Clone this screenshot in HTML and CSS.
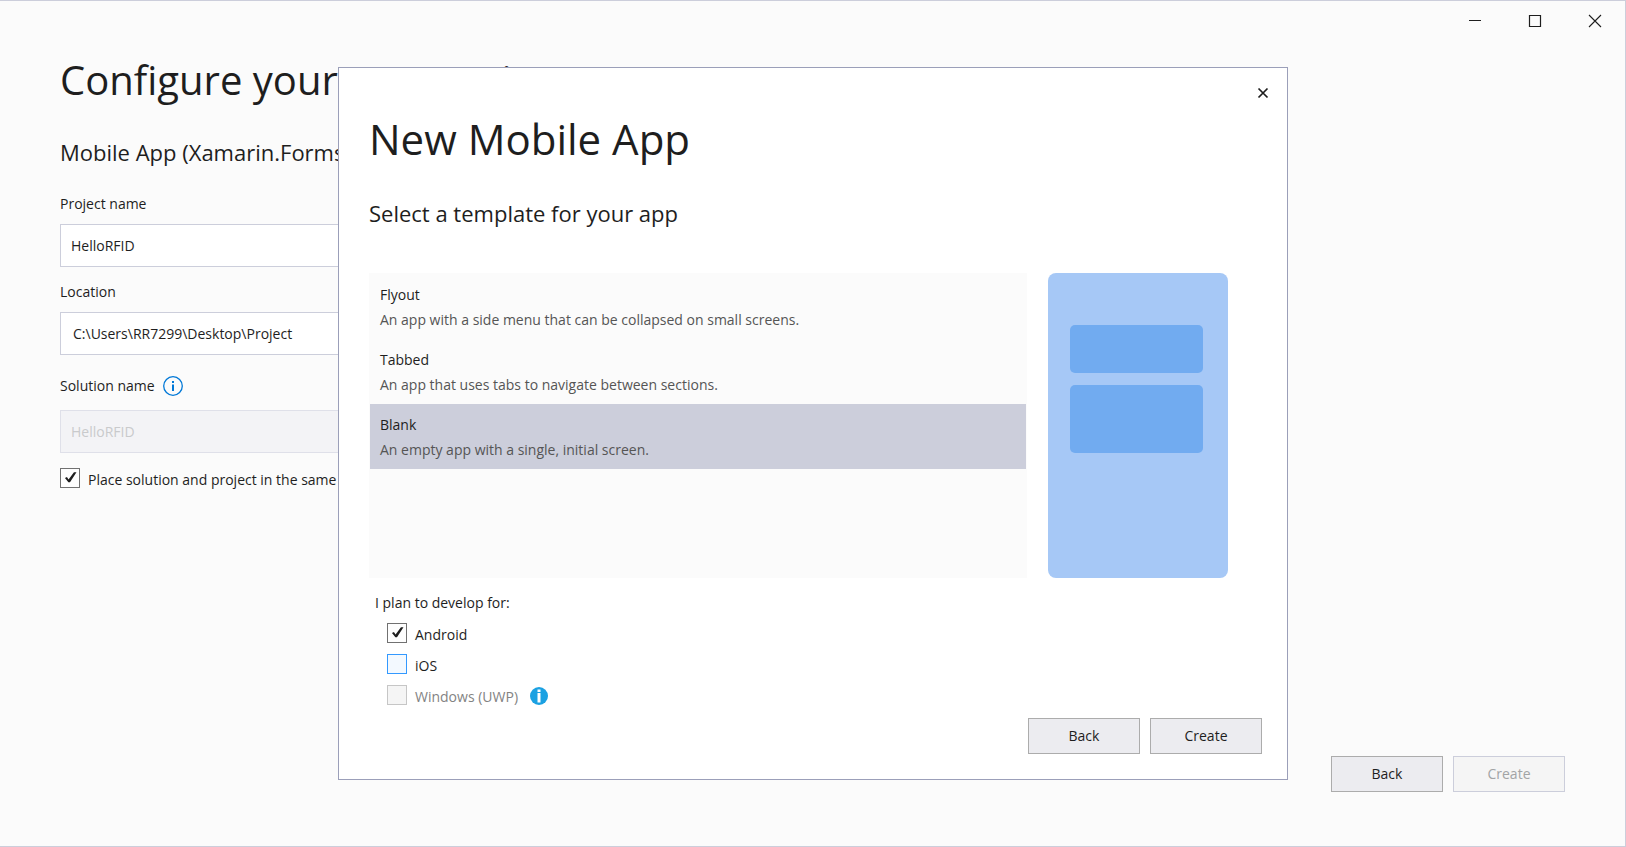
FILE: index.html
```html
<!DOCTYPE html>
<html lang="en">
<head>
<meta charset="utf-8">
<title>Configure your new project</title>
<link rel="stylesheet" href="styles.css">
</head>
<body>
<div class="window">
  <header class="titlebar">
    <button class="caption" type="button" aria-label="Minimize"><svg width="14" height="14" viewBox="0 0 14 14"><path d="M1 6.500h12" stroke="#1e1e1e" fill="none"/></svg></button>
    <button class="caption" type="button" aria-label="Maximize"><svg width="14" height="14" viewBox="0 0 14 14"><path d="M1.500 1.500h11v11h-11z" stroke="#1e1e1e" stroke-width="1.200" fill="none"/></svg></button>
    <button class="caption" type="button" aria-label="Close"><svg width="14" height="14" viewBox="0 0 14 14"><path d="M1 1l12 12M13 1L1 13" stroke="#1e1e1e" stroke-width="1.100" fill="none"/></svg></button>
  </header>

  <main class="page">
    <h1 class="title page-title">Configure your new project</h1>
    <h2 class="subtitle">Mobile App (Xamarin.Forms)</h2>
    <form class="form">
      <div class="field">
        <label class="label" for="project">Project name</label>
        <input class="textbox" id="project" type="text" value="HelloRFID">
      </div>
      <div class="field">
        <label class="label" for="location">Location</label>
        <input class="textbox textbox-combo" id="location" type="text" value="C:\Users\RR7299\Desktop\Project">
      </div>
      <div class="field field-solution">
        <div class="label-row">
          <label class="label" for="solution">Solution name</label>
          <svg width="20" height="20" viewBox="0 0 20 20" aria-hidden="true"><circle cx="10" cy="10" r="9.300" fill="none" stroke="#0078d7" stroke-width="1.300"/><path d="M9 5h2v2H9zM9 8.500h2v6.500H9z" fill="#0078d7"/></svg>
        </div>
        <input class="textbox" id="solution" type="text" value="HelloRFID" disabled>
      </div>
      <label class="check"><input class="tick" type="checkbox" checked><span class="check-text">Place solution and project in the same directory</span></label>
    </form>
  </main>

  <footer class="actions page-actions">
    <button class="button" type="button">Back</button>
    <button class="button" type="button" disabled>Create</button>
  </footer>
</div>

<div class="overlay">
  <section class="modal" role="dialog" aria-labelledby="modal-title">
    <div class="modal-bar">
      <button class="modal-close" type="button" aria-label="Close"><svg width="12" height="12" viewBox="0 0 12 12"><path d="M1.500 1.500l9 9M10.500 1.500l-9 9" stroke="#1e1e1e" stroke-width="1.700" fill="none"/></svg></button>
    </div>
    <div class="modal-body">
      <h2 class="title" id="modal-title">New Mobile App</h2>
      <h3 class="subtitle modal-subtitle">Select a template for your app</h3>
      <div class="chooser">
        <div class="templates" role="listbox" aria-label="Template">
          <button class="template" type="button" role="option" aria-selected="false"><span class="template-name">Flyout</span><span class="template-text">An app with a side menu that can be collapsed on small screens.</span></button>
          <button class="template" type="button" role="option" aria-selected="false"><span class="template-name">Tabbed</span><span class="template-text">An app that uses tabs to navigate between sections.</span></button>
          <button class="template" type="button" role="option" aria-selected="true"><span class="template-name">Blank</span><span class="template-text">An empty app with a single, initial screen.</span></button>
        </div>
        <div class="preview">
          <div class="block block-short"></div>
          <div class="block block-tall"></div>
        </div>
      </div>
      <fieldset class="platforms">
        <legend class="legend">I plan to develop for:</legend>
        <div class="platform-list">
          <label class="check"><input class="tick" type="checkbox" checked><span class="check-text">Android</span></label>
          <label class="check"><input class="tick tick-hot" type="checkbox"><span class="check-text">iOS</span></label>
          <div class="platform-row">
            <label class="check"><input class="tick" type="checkbox" disabled><span class="check-text">Windows (UWP)</span></label>
            <svg width="18" height="18" viewBox="0 0 18 18" aria-hidden="true"><circle cx="9" cy="9" r="9" fill="#1ba1e2"/><path d="M7.500 2.500h3v2.500h-3zM7.500 6h3v9.500h-3z" fill="#fff"/></svg>
          </div>
        </div>
      </fieldset>
    </div>
    <div class="actions modal-actions">
      <button class="button" type="button">Back</button>
      <button class="button" type="button">Create</button>
    </div>
  </section>
</div>
</body>
</html>
```

FILE: styles.css
```css
* { box-sizing: border-box; }

body {
  margin: 0;
  background: #fbfbfb;
  color: #1e1e1e;
  font: 14px/20px "Open Sans", "Noto Sans", sans-serif;
}

button, input { font: inherit; color: inherit; }
svg { display: block; flex: none; }

.window {
  display: flex;
  flex-direction: column;
  min-height: 100vh;
  border: 1px solid #cccedb;
  border-left: 0;
}

.titlebar { display: flex; justify-content: flex-end; }
.caption {
  display: grid;
  place-items: center;
  width: 60px;
  height: 40px;
  padding: 0;
  border: 0;
  background: none;
}

.page { flex: 1; padding: 9px 60px 0; }
.title { margin: 0; font-size: 42px; line-height: 60px; font-weight: 400; }
.page-title { font-size: 40px; }
.subtitle { margin: 27px 0 0; font-size: 22px; line-height: 30px; font-weight: 400; }

.form { max-width: 800px; margin-top: 27px; }
.field { display: flex; flex-direction: column; gap: 10px; margin-bottom: 15px; }
.field-solution { padding-top: 6px; gap: 14px; }
.label-row { display: flex; align-items: center; gap: 8px; }
.textbox {
  width: 100%;
  height: 43px;
  padding: 0 10px;
  border: 1px solid #cccedb;
  border-radius: 0;
  background: #fff;
}
.textbox-combo { padding-left: 12px; }
.textbox:disabled { border-color: #dfe0e9; background: #f3f3f6; color: #c9cacc; }

.check { display: flex; align-items: flex-start; gap: 8px; }
.check-text { padding-top: 2px; white-space: nowrap; }
.tick {
  appearance: none;
  flex: none;
  width: 20px;
  height: 20px;
  margin: 0;
  border: 1px solid #717171;
  background: #fefefe;
}
.tick:checked::before {
  content: "";
  display: block;
  width: 18px;
  height: 18px;
  background: #1e1e1e;
  clip-path: polygon(22% 50%, 33% 45%, 42% 58%, 72% 18%, 86% 18%, 50% 74%, 41% 74%);
}
.tick-hot { border-color: #3399ff; background: #f3f9ff; }
.tick:disabled { border-color: #c6c6c6; background: #f5f5f5; }
.tick:disabled + .check-text { color: #838383; }

.actions { display: flex; justify-content: flex-end; gap: 10px; }
.page-actions { padding: 0 60px 54px; }
.button {
  width: 112px;
  height: 36px;
  padding: 0;
  border: 1px solid #acacac;
  background: #ececf0;
}
.button:disabled { border-color: #cccedb; background: #f5f5f5; color: #a2a4a5; }

.overlay { position: absolute; inset: 0; display: grid; place-items: center; }
.modal {
  width: 100%;
  max-width: 950px;
  border: 1px solid #9b9fb9;
  background: #fff;
}
.modal-bar { display: flex; justify-content: flex-end; padding: 13px 12px 4px; }
.modal-close {
  display: grid;
  place-items: center;
  width: 24px;
  height: 24px;
  padding: 0;
  border: 0;
  background: none;
}
.modal-body { padding: 0 59px 0 30px; }
.modal-subtitle { margin-top: 29px; }

.chooser { display: flex; gap: 21px; margin-top: 45px; }
.templates { flex: 1; padding: 1px; background: #fbfbfb; }
.template {
  display: block;
  width: 100%;
  padding: 8px 10px 7px;
  border: 0;
  background: none;
  line-height: 25px;
  text-align: left;
}
.template[aria-selected="true"] { background: #cccedb; }
.template-name, .template-text { display: block; }
.template-text { color: #555; }

.preview {
  display: flex;
  flex-direction: column;
  gap: 12px;
  width: 180px;
  height: 305px;
  padding: 52px 25px 0 22px;
  border-radius: 8px;
  background: #a6c8f6;
}
.block { border-radius: 5px; background: #71abf0; }
.block-short { height: 48px; }
.block-tall { height: 68px; }

.platforms { margin: 15px 0 0; padding: 0 6px; border: 0; }
.legend { padding: 0; }
.platform-list { display: flex; flex-direction: column; gap: 9px; padding: 10px 12px 0; }
.platform-row { display: flex; align-items: center; gap: 12px; }
.modal-actions { padding: 11px 25px 25px; }
```
